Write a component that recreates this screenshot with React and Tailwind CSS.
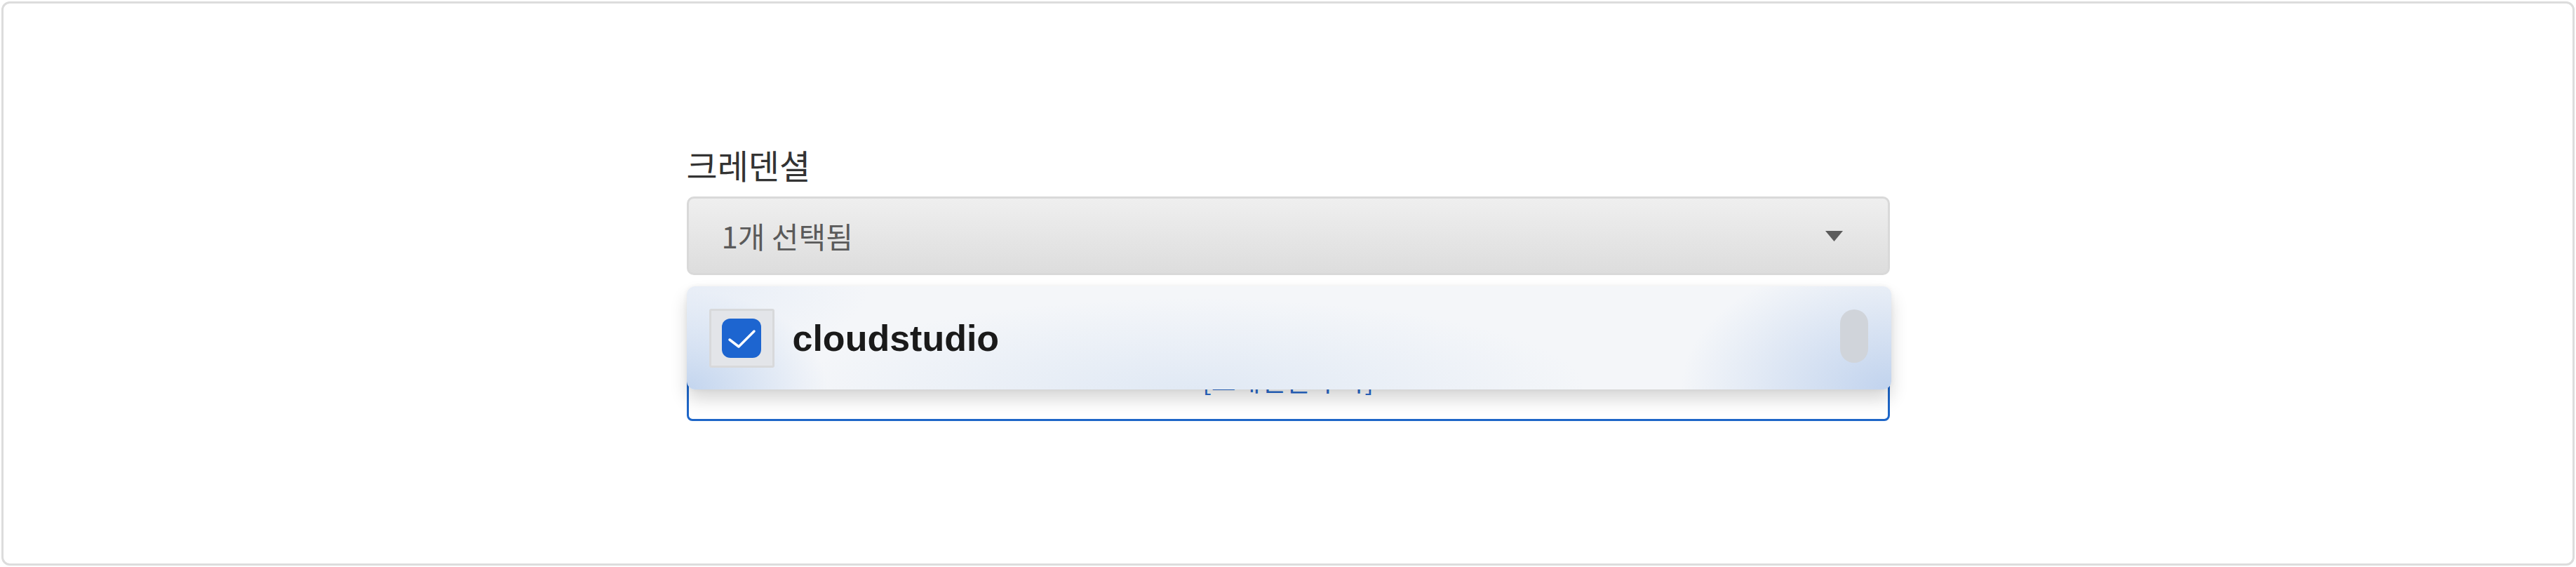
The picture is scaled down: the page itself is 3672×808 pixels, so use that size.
export default function App() {
  return (
    <div className="w-[3672px] h-[808px] bg-white p-[2px]">
      <div className="h-full w-full rounded-[12px] border-[3px] border-[#dcdcdc] bg-white flex justify-center pt-[205px]">
        <div className="w-[1715px] flex flex-col">
          <div className="h-[48px] text-[48px] leading-[48px] text-[#333333] font-['Noto_Sans_CJK_KR',sans-serif]">
            크레덴셜
          </div>
          <div className="mt-[22px] relative">
            <div className="h-[112px] rounded-[10px] border-[3px] border-[#d9d9d9] bg-gradient-to-b from-[#efefef] to-[#dddddd] flex items-center justify-between pl-[47px] pr-[64px]">
              <span className="text-[42px] leading-none text-[#5a5a5a] font-['Noto_Sans_CJK_KR',sans-serif]">
                1개 선택됨
              </span>
              <svg width="25" height="15" viewBox="0 0 25 15">
                <polygon points="0,0 25,0 12.5,15" fill="#5b5b5b" />
              </svg>
            </div>
            <div className="absolute left-0 right-[-2px] top-[128px] h-[147px] z-10 rounded-[12px] shadow-[0_14px_24px_rgba(0,0,0,0.16),0_0_6px_rgba(0,0,0,0.06)] bg-[radial-gradient(200px_140px_at_0%_100%,rgba(192,211,238,0.95),rgba(192,211,238,0)),radial-gradient(300px_190px_at_100%_100%,rgba(190,209,237,0.95),rgba(190,209,237,0)),radial-gradient(560px_130px_at_42%_100%,rgba(214,226,242,0.65),rgba(214,226,242,0)),radial-gradient(260px_110px_at_0%_0%,rgba(228,235,246,0.8),rgba(228,235,246,0)),linear-gradient(#f4f6f9,#f4f6f9)] flex items-center pl-[32px] pr-[33px]">
              <div className="w-[93px] h-[84px] rounded-[3px] border-[3px] border-[#d8d9db] bg-[#e3e5e9] flex items-center justify-center">
                <div className="w-[56px] h-[56px] rounded-[12px] bg-[#1d65d0] flex items-center justify-center">
                  <svg width="56" height="56" viewBox="0 0 56 56">
                    <path d="M11 30 L24 40 L46 18" fill="none" stroke="#ffffff" strokeWidth="3.5" strokeLinecap="round" strokeLinejoin="round" />
                  </svg>
                </div>
              </div>
              <span className="ml-[26px] text-[52px] leading-none font-bold text-[#1a1a1a] font-['Liberation_Sans',sans-serif]">
                cloudstudio
              </span>
              <div className="ml-auto w-[40px] h-[76px] rounded-full bg-[#d0d4da] -translate-y-[3px]" />
            </div>
          </div>
          <button className="mt-[98px] h-[110px] rounded-[8px] border-[3px] border-[#1e66c8] bg-white text-[#2a6acb] text-[38px] leading-none flex items-center justify-center font-['Noto_Sans_CJK_KR',sans-serif]">
            <span className="-translate-y-[4px]">[크레덴셜 추가]</span>
          </button>
        </div>
      </div>
    </div>
  );
}
